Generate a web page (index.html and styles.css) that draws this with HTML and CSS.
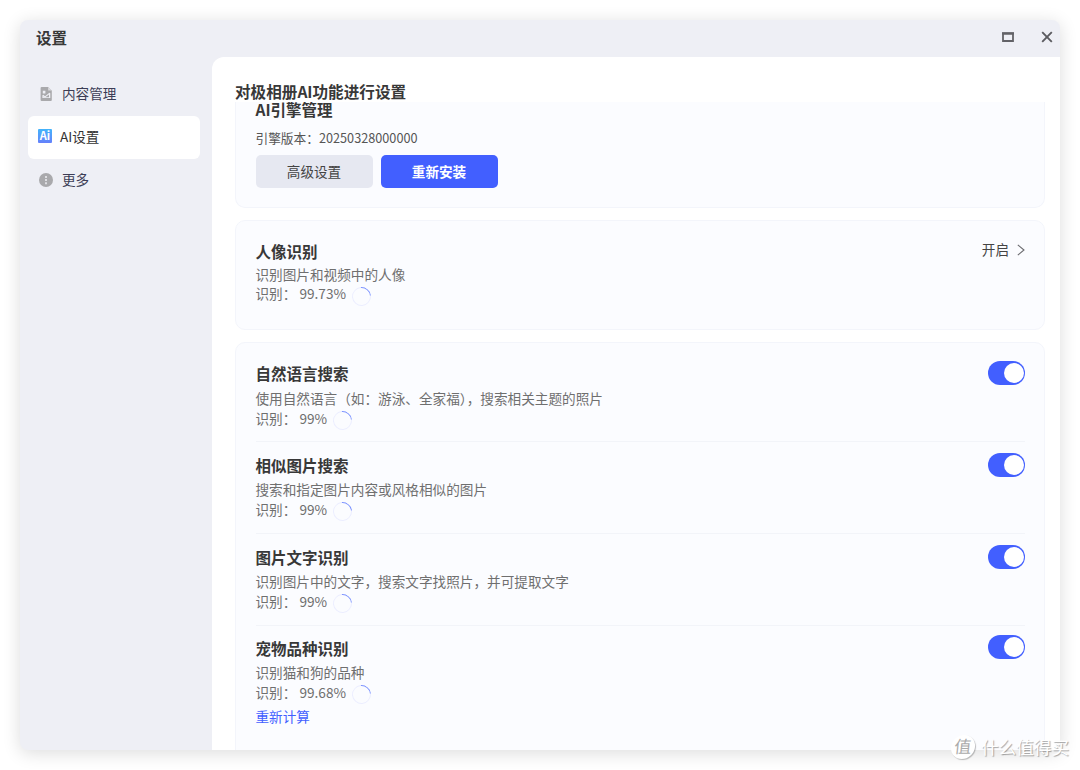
FILE: index.html
```html
<!DOCTYPE html>
<html lang="zh-CN">
<head>
  <meta charset="UTF-8">
  <title>设置</title>
  <meta name="viewport" content="width=device-width, initial-scale=1.0">
  <link rel="stylesheet" href="styles.css">
</head>
<body>
  <div class="window">
    <header class="titlebar">
      <h1>设置</h1>
      <div class="controls">
        <svg width="12" height="10" viewBox="0 0 12 10"><path d="M1 1.5h10v7.5H1z" fill="none" stroke="#626267" stroke-width="1.8"/><path d="M0 1.4h12" stroke="#626267" stroke-width="2.2"/></svg>
        <svg width="12" height="12" viewBox="0 0 12 12"><path d="M1.2 1.2l9.6 9.6M10.8 1.2l-9.6 9.6" stroke="#5b5b60" stroke-width="1.9"/></svg>
      </div>
    </header>

    <div class="body">
      <nav class="sidebar">
        <a class="nav-item">
          <svg width="14" height="14" viewBox="0 0 14 14"><path d="M2.6 0h6.6l3.6 3.6V13a1 1 0 0 1-1 1H2.6a1 1 0 0 1-1-1V1a1 1 0 0 1 1-1z" fill="#a9a9ac"/><path d="M9.2 0v3.6h3.6z" fill="#dcdce0"/><path d="M3.8 3.8h2.6v2.6H3.8zM3.4 8.2l.9-.4 1.7 1.5 4.4-3.6.9.5v4.9H3.4z" fill="#eeeff5"/><path d="M4.6 9.6l1.4.9 4-3v2.7H4.6z" fill="#a9a9ac"/></svg>
          <span>内容管理</span>
        </a>
        <a class="nav-item active">
          <span class="ai-icon">Ai</span>
          <span>AI设置</span>
        </a>
        <a class="nav-item">
          <svg width="14" height="14" viewBox="0 0 14 14"><circle cx="7" cy="7" r="7" fill="#a9a9ac"/><path d="M6 3h2v2H6zM6 6.1h2v2H6zM6 9.2h2v2H6z" fill="#dedee2"/></svg>
          <span>更多</span>
        </a>
      </nav>

      <main class="content">
        <h2>对极相册AI功能进行设置</h2>

        <div class="scroll">
          <section class="card engine">
            <h3>AI引擎管理</h3>
            <p class="version">引擎版本：20250328000000</p>
            <div class="buttons">
              <button>高级设置</button>
              <button class="primary">重新安装</button>
            </div>
          </section>

          <section class="card portrait">
            <div class="info">
              <h3>人像识别</h3>
              <p>识别图片和视频中的人像</p>
              <p class="status">识别： 99.73% <span class="spinner"></span></p>
            </div>
            <a class="state">开启
              <svg width="8" height="12" viewBox="0 0 8 12"><path d="M0.8 0.8L7 6l-6.2 5.2" fill="none" stroke="#6b6b6f" stroke-width="1.1"/></svg>
            </a>
          </section>

          <section class="card features">
            <div class="row">
              <div class="info">
                <h3>自然语言搜索</h3>
                <p>使用自然语言（如：游泳、全家福），搜索相关主题的照片</p>
                <p class="status">识别： 99% <span class="spinner"></span></p>
              </div>
              <span class="switch"></span>
            </div>
            <div class="row">
              <div class="info">
                <h3>相似图片搜索</h3>
                <p>搜索和指定图片内容或风格相似的图片</p>
                <p class="status">识别： 99% <span class="spinner"></span></p>
              </div>
              <span class="switch"></span>
            </div>
            <div class="row">
              <div class="info">
                <h3>图片文字识别</h3>
                <p>识别图片中的文字，搜索文字找照片，并可提取文字</p>
                <p class="status">识别： 99% <span class="spinner"></span></p>
              </div>
              <span class="switch"></span>
            </div>
            <div class="row last">
              <div class="info">
                <h3>宠物品种识别</h3>
                <p>识别猫和狗的品种</p>
                <p class="status">识别： 99.68% <span class="spinner"></span></p>
                <a class="link">重新计算</a>
              </div>
              <span class="switch"></span>
            </div>
          </section>
        </div>
      </main>
    </div>
  </div>

  <div class="watermark"><span class="badge">值</span><span>什么值得买</span></div>
</body>
</html>
```

FILE: styles.css
```css
* {
  box-sizing: border-box;
  margin: 0;
  padding: 0;
}

body {
  height: 770px;
  padding: 20px;
  overflow: hidden;
  background: #fff;
  color: #333;
  font-family: "Noto Sans CJK SC", sans-serif;
  font-size: 13.6px;
}

.window {
  height: 730px;
  display: flex;
  flex-direction: column;
  overflow: hidden;
  background: #eeeff5;
  border-radius: 8px 8px 0 8px;
  box-shadow: 0 3px 18px rgba(0, 0, 0, 0.14);
}

/* Title bar */
.titlebar {
  height: 37px;
  display: flex;
  justify-content: space-between;
  align-items: center;
  padding: 0 7px 3px 16px;
}

h1,
h2,
h3 {
  font-size: 15.5px;
  font-weight: 700;
  line-height: 24px;
  color: #383838;
}

.controls {
  display: flex;
  align-items: center;
  gap: 27px;
}

.controls svg {
  display: block;
}

.body {
  flex: 1;
  display: flex;
  min-height: 0;
}

/* Sidebar */
.sidebar {
  width: 192px;
  padding: 16px 12px 0 8px;
}

.nav-item {
  height: 43px;
  display: flex;
  align-items: center;
  gap: 9px;
  padding: 0 0 3px 11px;
  color: #3c3d55;
  border-radius: 6px;
}

.nav-item svg {
  margin-top: 1px;
}

.nav-item.active {
  gap: 8px;
  padding-left: 10px;
  background: #fff;
  color: #333;
}

.ai-icon {
  width: 14px;
  height: 14px;
  border-radius: 1px;
  background: linear-gradient(#43b4fb, #6580fb);
  color: #fff;
  font-size: 11px;
  font-weight: 700;
  line-height: 13px;
  text-align: center;
}

/* Content */
.content {
  flex: 1;
  display: flex;
  flex-direction: column;
  min-height: 0;
  padding: 22px 15px 0 23px;
  background: #fff;
  border-radius: 12px 0 0 0;
}

h2 {
  height: 23px;
  font-size: 15.6px;
}

.scroll {
  flex: 1;
  min-height: 0;
  overflow: hidden;
}

.card {
  width: 810px;
  margin-bottom: 12px;
  padding: 0 19px 0 19.5px;
  background: #fbfcff;
  border: 1px solid #f3f5fb;
  border-radius: 10px;
}

.engine {
  height: 106px;
  border-top: none;
  border-radius: 0 0 10px 10px;
}

.engine h3 {
  height: 16px;
  line-height: 14px;
}

.version {
  margin-top: 10px;
  font-size: 12.7px;
  line-height: 20px;
  color: #555;
}

.buttons {
  display: flex;
  gap: 8px;
  margin-top: 7px;
}

button {
  width: 117px;
  height: 33px;
  padding-bottom: 1px;
  border: none;
  border-radius: 5px;
  background: #e6e8f1;
  color: #444;
  font-family: inherit;
  font-size: 13.6px;
}

.primary {
  background: #425fff;
  color: #fff;
  font-weight: 700;
}

.portrait {
  height: 110px;
  display: flex;
  justify-content: space-between;
  padding-top: 18px;
}

.info p {
  font-size: 13.63px;
  line-height: 20px;
  color: #6f6f6f;
}

.info h3 + p {
  margin-top: 3px;
}

.portrait h3 + p {
  margin-top: 1px;
}

.info .status {
  display: flex;
  white-space: pre;
}

.portrait .status {
  line-height: 19px;
}

.spinner {
  width: 19px;
  height: 19px;
  margin: 3px 0 -3px 3px;
  border: 1px solid #eceeff;
  border-top-color: #7f95ff;
  border-radius: 50%;
  transform: rotate(40deg);
}

.state {
  display: flex;
  gap: 8px;
  height: 22px;
  margin-top: -1px;
  line-height: 22px;
  color: #444;
}

.state svg {
  margin-top: 6px;
}

.features {
  height: 430px;
  padding-top: 7px;
}

.row {
  height: 92px;
  display: flex;
  justify-content: space-between;
  padding-top: 11px;
  border-bottom: 1px solid #f2f4f9;
}

.row + .row .info h3 + p {
  margin-top: 2px;
}

.row.last {
  padding-top: 10px;
  border-bottom: none;
}

.link {
  display: block;
  margin-top: 4px;
  line-height: 20px;
  color: #425fff;
}

.switch {
  width: 37px;
  height: 24px;
  display: flex;
  justify-content: flex-end;
  padding: 2px 1px;
  border-radius: 12px;
  background: #425fff;
}

.last .switch {
  margin-top: -1px;
}

.switch::after {
  content: "";
  width: 20px;
  height: 20px;
  border-radius: 50%;
  background: #fff;
}

/* Stamp over the lower right corner */
.watermark {
  position: absolute;
  left: 951px;
  top: 735px;
  display: flex;
  align-items: center;
  gap: 6px;
  font-size: 17.6px;
  line-height: 24px;
  color: #fff;
  text-shadow: 1px 1px 1px rgba(0, 0, 0, 0.35);
  white-space: nowrap;
}

.badge {
  width: 24px;
  height: 24px;
  border-radius: 50%;
  background: #fff;
  box-shadow: 1px 1px 1px rgba(0, 0, 0, 0.25);
  color: #aaa;
  font-size: 17px;
  line-height: 22px;
  text-align: center;
  text-shadow: none;
  transform: skewX(-6deg);
}
```
